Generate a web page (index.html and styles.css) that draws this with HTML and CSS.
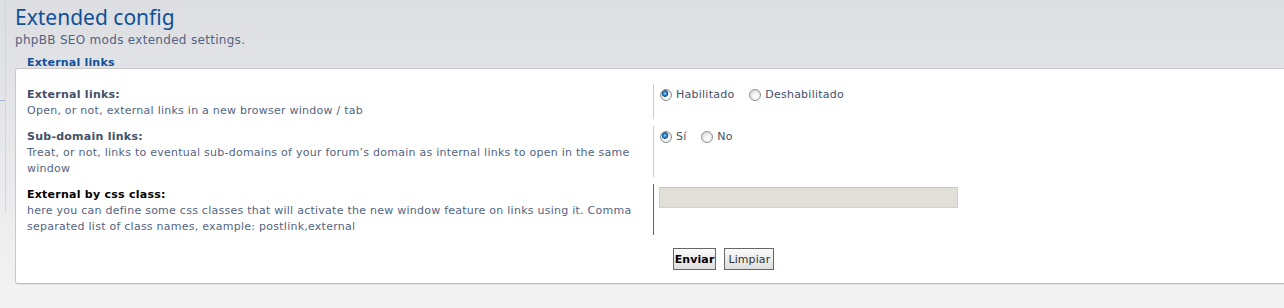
FILE: index.html
```html
<!DOCTYPE html>
<html lang="en">
<head>
    <meta charset="UTF-8">
    <title>Extended config</title>
    <link rel="stylesheet" href="styles.css">
</head>
<body>
    <div class="page">
        <div class="menu-edge"><span class="menu-tick"></span></div>

        <div class="main">
            <h1>Extended config</h1>
            <p class="intro">phpBB SEO mods extended settings.</p>

            <div class="legend">External links</div>
            <div class="panel">
                <dl class="setting">
                    <dt>
                        <label for="ext_links">External links:</label>
                        <span class="explain">Open, or not, external links in a new browser window / tab</span>
                    </dt>
                    <dd>
                        <label class="radio-label"><input type="radio" name="ext_links" id="ext_links" checked> Habilitado</label>
                        <label class="radio-label"><input type="radio" name="ext_links"> Deshabilitado</label>
                    </dd>
                </dl>

                <dl class="setting">
                    <dt>
                        <label for="sub_links">Sub-domain links:</label>
                        <span class="explain">Treat, or not, links to eventual sub-domains of your forum’s domain as internal links to open in the same window</span>
                    </dt>
                    <dd>
                        <label class="radio-label"><input type="radio" name="sub_links" id="sub_links" checked> Sí</label>
                        <label class="radio-label"><input type="radio" name="sub_links"> No</label>
                    </dd>
                </dl>

                <dl class="setting active">
                    <dt>
                        <label for="css_class">External by css class:</label>
                        <span class="explain">here you can define some css classes that will activate the new window feature on links using it. Comma separated list of class names, example: postlink,external</span>
                    </dt>
                    <dd>
                        <input type="text" id="css_class" class="text-input">
                    </dd>
                </dl>

                <div class="submit-buttons">
                    <button type="submit" class="btn btn-primary">Enviar</button>
                    <button type="reset" class="btn">Limpiar</button>
                </div>
            </div>
        </div>
    </div>
</body>
</html>
```

FILE: styles.css
```css
:root {
    --blue: #115098;
    --label-color: #425067;
    --text-color: #536482;
    --line-color: #cccccc;
}

* {
    margin: 0;
    padding: 0;
    box-sizing: border-box;
}

html, body {
    height: 100%;
}

body {
    background: linear-gradient(to bottom, #dcdee2 0px, #e1e2e6 60px, #f2f2f2 290px);
    font-family: "DejaVu Sans", Verdana, sans-serif;
    font-size: 11px;
    color: var(--text-color);
    overflow: hidden;
}

.page {
    display: flex;
}

/* leftover edge of the side menu */
.menu-edge {
    width: 6px;
    height: 212px;
    border-right: 1px solid #d3d5da;
    position: relative;
    flex-shrink: 0;
}

.menu-tick {
    position: absolute;
    left: 0;
    top: 100px;
    width: 5px;
    border-top: 1px solid #9fb4cc;
}

.main {
    padding: 4px 0 0 9px;
}

h1 {
    font-family: "Noto Sans", "Open Sans", sans-serif;
    font-weight: normal;
    font-size: 21px;
    line-height: 26px;
    color: var(--blue);
}

.intro {
    margin-top: 2px;
    font-size: 12px;
    line-height: 16px;
    letter-spacing: 0.3px;
    color: var(--text-color);
}

.legend {
    margin: 9px 0 -1px 12px;
    font-weight: bold;
    font-size: 11px;
    line-height: 12px;
    letter-spacing: 0.2px;
    color: var(--blue);
    position: relative;
}

.panel {
    width: 1406px;
    background-color: #ffffff;
    border: 1px solid #c9c9c9;
    border-bottom-color: #bdbdbd;
    border-radius: 3px 0 0 3px;
    padding: 15px 0 13px 11px;
    box-shadow: 0 1px 1px rgba(0, 0, 0, 0.06);
}

.setting {
    display: flex;
    margin-bottom: 7px;
    letter-spacing: 0.25px;
}

.setting dt {
    width: 626px;
    padding: 3px 14px 0 0;
    line-height: 16px;
}

.setting dt label {
    display: block;
    font-weight: bold;
    color: var(--label-color);
}

.explain {
    display: block;
    color: var(--text-color);
}

.setting dd {
    border-left: 1px solid var(--line-color);
    padding: 3px 0 0 5px;
    line-height: 16px;
}

.setting.active dt label {
    color: #000000;
}

.setting.active dd {
    border-left-color: #666666;
}

.radio-label {
    display: inline-flex;
    align-items: center;
    margin-right: 10px;
    color: var(--label-color);
}

.radio-label input {
    appearance: none;
    width: 12px;
    height: 12px;
    margin: 0 4px 0 1px;
    border-radius: 50%;
    border: 1px solid #8e8f8f;
    background: radial-gradient(circle at 60% 65%, #ffffff 0, #f2f2f2 35%, #cfcfcf 100%);
}

.radio-label input:checked {
    background:
        radial-gradient(circle at 40% 35%, #b4dcf8 0, #3c8ad0 1.5px, #0d4f8e 3px, transparent 3.6px),
        radial-gradient(circle at 60% 65%, #ffffff 0, #f2f2f2 35%, #cfcfcf 100%);
}

.text-input {
    display: block;
    width: 299px;
    height: 21px;
    background-color: #e2ded8;
    border: 1px solid #d2cfca;
    border-top-color: #c9c6c1;
}

.submit-buttons {
    display: flex;
    justify-content: center;
    gap: 8px;
    padding-top: 6px;
}

.btn {
    font-family: "DejaVu Sans", Verdana, sans-serif;
    font-size: 11px;
    letter-spacing: 0.1px;
    color: #333333;
    height: 22px;
    padding: 0 3px;
    border: 1px solid #666666;
    background: linear-gradient(to bottom, #fafafa, #dedede);
}

.btn-primary {
    font-weight: bold;
    color: #000000;
    padding: 0 1px;
}
```
